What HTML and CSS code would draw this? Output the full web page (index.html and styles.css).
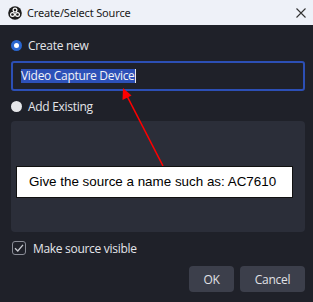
FILE: index.html
```html
<!DOCTYPE html>
<html lang="en">
<head>
    <meta charset="UTF-8">
    <meta name="viewport" content="width=device-width, initial-scale=1.0">
    <title>Create/Select Source</title>
    <link rel="stylesheet" href="styles.css">
</head>
<body>
    <div class="titlebar">
        <svg class="app-icon" width="14" height="14" viewBox="0 0 14 14">
            <circle cx="7" cy="7" r="6.8" fill="#1c1c1c"/>
            <circle cx="7" cy="4.1" r="2.5" fill="#fff"/>
            <circle cx="4.5" cy="8.5" r="2.5" fill="#fff"/>
            <circle cx="9.5" cy="8.5" r="2.5" fill="#fff"/>
            <circle cx="7" cy="4.1" r="1.3" fill="#1c1c1c"/>
            <circle cx="4.5" cy="8.5" r="1.3" fill="#1c1c1c"/>
            <circle cx="9.5" cy="8.5" r="1.3" fill="#1c1c1c"/>
        </svg>
        <span class="title">Create/Select Source</span>
        <svg class="close" width="10" height="10" viewBox="0 0 10 10">
            <path d="M0.5 0.5 L9.5 9.5 M9.5 0.5 L0.5 9.5" stroke="#333" stroke-width="1.1"/>
        </svg>
    </div>

    <div class="dialog">
        <div class="option-row">
            <span class="radio checked"></span>
            <span>Create new</span>
        </div>
        <div class="name-input">
            <span class="selected">Video Capture Device</span><span class="caret"></span>
        </div>
        <div class="option-row existing">
            <span class="radio"></span>
            <span>Add Existing</span>
        </div>
        <div class="source-list"></div>
        <div class="check-row">
            <span class="checkbox">
                <svg width="10" height="10" viewBox="0 0 10 10">
                    <path d="M1 5.2 L3.8 8 L9 1.8" fill="none" stroke="#c8cad0" stroke-width="1.3"/>
                </svg>
            </span>
            <span>Make source visible</span>
        </div>
        <div class="buttons">
            <button class="btn ok">OK</button>
            <button class="btn cancel">Cancel</button>
        </div>
    </div>

    <!-- annotation drawn over the screenshot -->
    <svg class="arrow" width="313" height="302" viewBox="0 0 313 302">
        <line x1="163" y1="166" x2="127" y2="96" stroke="#ff0000" stroke-width="1.6"/>
        <polygon points="123,88 122.5,100 131.5,95.5" fill="#ff0000"/>
    </svg>
    <div class="callout">Give the source a name such as: AC7610</div>
</body>
</html>
```

FILE: styles.css
```css
body {
    margin: 0;
    width: 313px;
    height: 302px;
    overflow: hidden;
    background: #1f2129;
    font-family: "Open Sans", "Noto Sans", sans-serif;
    color: #e4e5ea;
    position: relative;
}

.titlebar {
    height: 25px;
    background: #eef1f8;
    display: flex;
    align-items: center;
    padding: 0 7px 0 8px;
}

.app-icon {
    margin-top: 1px;
}

.title {
    margin-left: 5px;
    font-family: "Noto Sans", "Open Sans", sans-serif;
    font-size: 11px;
    letter-spacing: -0.15px;
    color: #1b1b1b;
    flex: 1;
}

.dialog {
    padding: 11px 8px 0 11px;
    font-size: 12px;
    letter-spacing: -0.3px;
}

.option-row {
    height: 18px;
    display: flex;
    align-items: center;
    gap: 6px;
}

.option-row.existing {
    margin-top: 6px;
}

.radio {
    width: 11px;
    height: 11px;
    border-radius: 50%;
    background: #e6e7ea;
    box-sizing: border-box;
}

.radio.checked {
    border: 3.5px solid #2a66cf;
    background: #fff;
}

.name-input {
    margin-top: 7px;
    height: 30px;
    box-sizing: border-box;
    border: 2px solid #2c4fb5;
    border-radius: 3px;
    display: flex;
    align-items: center;
    padding-left: 8px;
}

.selected {
    background: #2d51b8;
    color: #f2f3f7;
    line-height: 13px;
    padding-bottom: 1px;
}

.caret {
    width: 1px;
    height: 14px;
    background: #e8e8e8;
}

.source-list {
    margin-top: 6px;
    height: 111px;
    background: #2b2e39;
    border-radius: 4px;
}

.check-row {
    margin-top: 7px;
    height: 18px;
    display: flex;
    align-items: center;
    gap: 7px;
    padding-left: 1px;
}

.checkbox {
    width: 14px;
    height: 14px;
    box-sizing: border-box;
    border: 1.5px solid #8a8d97;
    border-radius: 3px;
    display: flex;
    align-items: center;
    justify-content: center;
}

.buttons {
    margin-top: 9px;
    display: flex;
    justify-content: flex-end;
    gap: 6px;
}

.btn {
    height: 26px;
    border: none;
    border-radius: 4px;
    background: #3c3f4b;
    color: #e0e1e6;
    font-family: "Open Sans", "Noto Sans", sans-serif;
    font-size: 12px;
    letter-spacing: -0.3px;
    padding: 0;
}

.btn.ok {
    width: 45px;
}

.btn.cancel {
    width: 65px;
}

.arrow {
    position: absolute;
    left: 0;
    top: 0;
    pointer-events: none;
}

.callout {
    position: absolute;
    left: 16px;
    top: 166px;
    width: 277px;
    height: 32px;
    box-sizing: border-box;
    border: 1px solid #111;
    background: #fff;
    color: #000;
    font-family: "Liberation Sans", Arial, sans-serif;
    font-size: 13.4px;
    line-height: 30px;
    padding-left: 12px;
}
```
